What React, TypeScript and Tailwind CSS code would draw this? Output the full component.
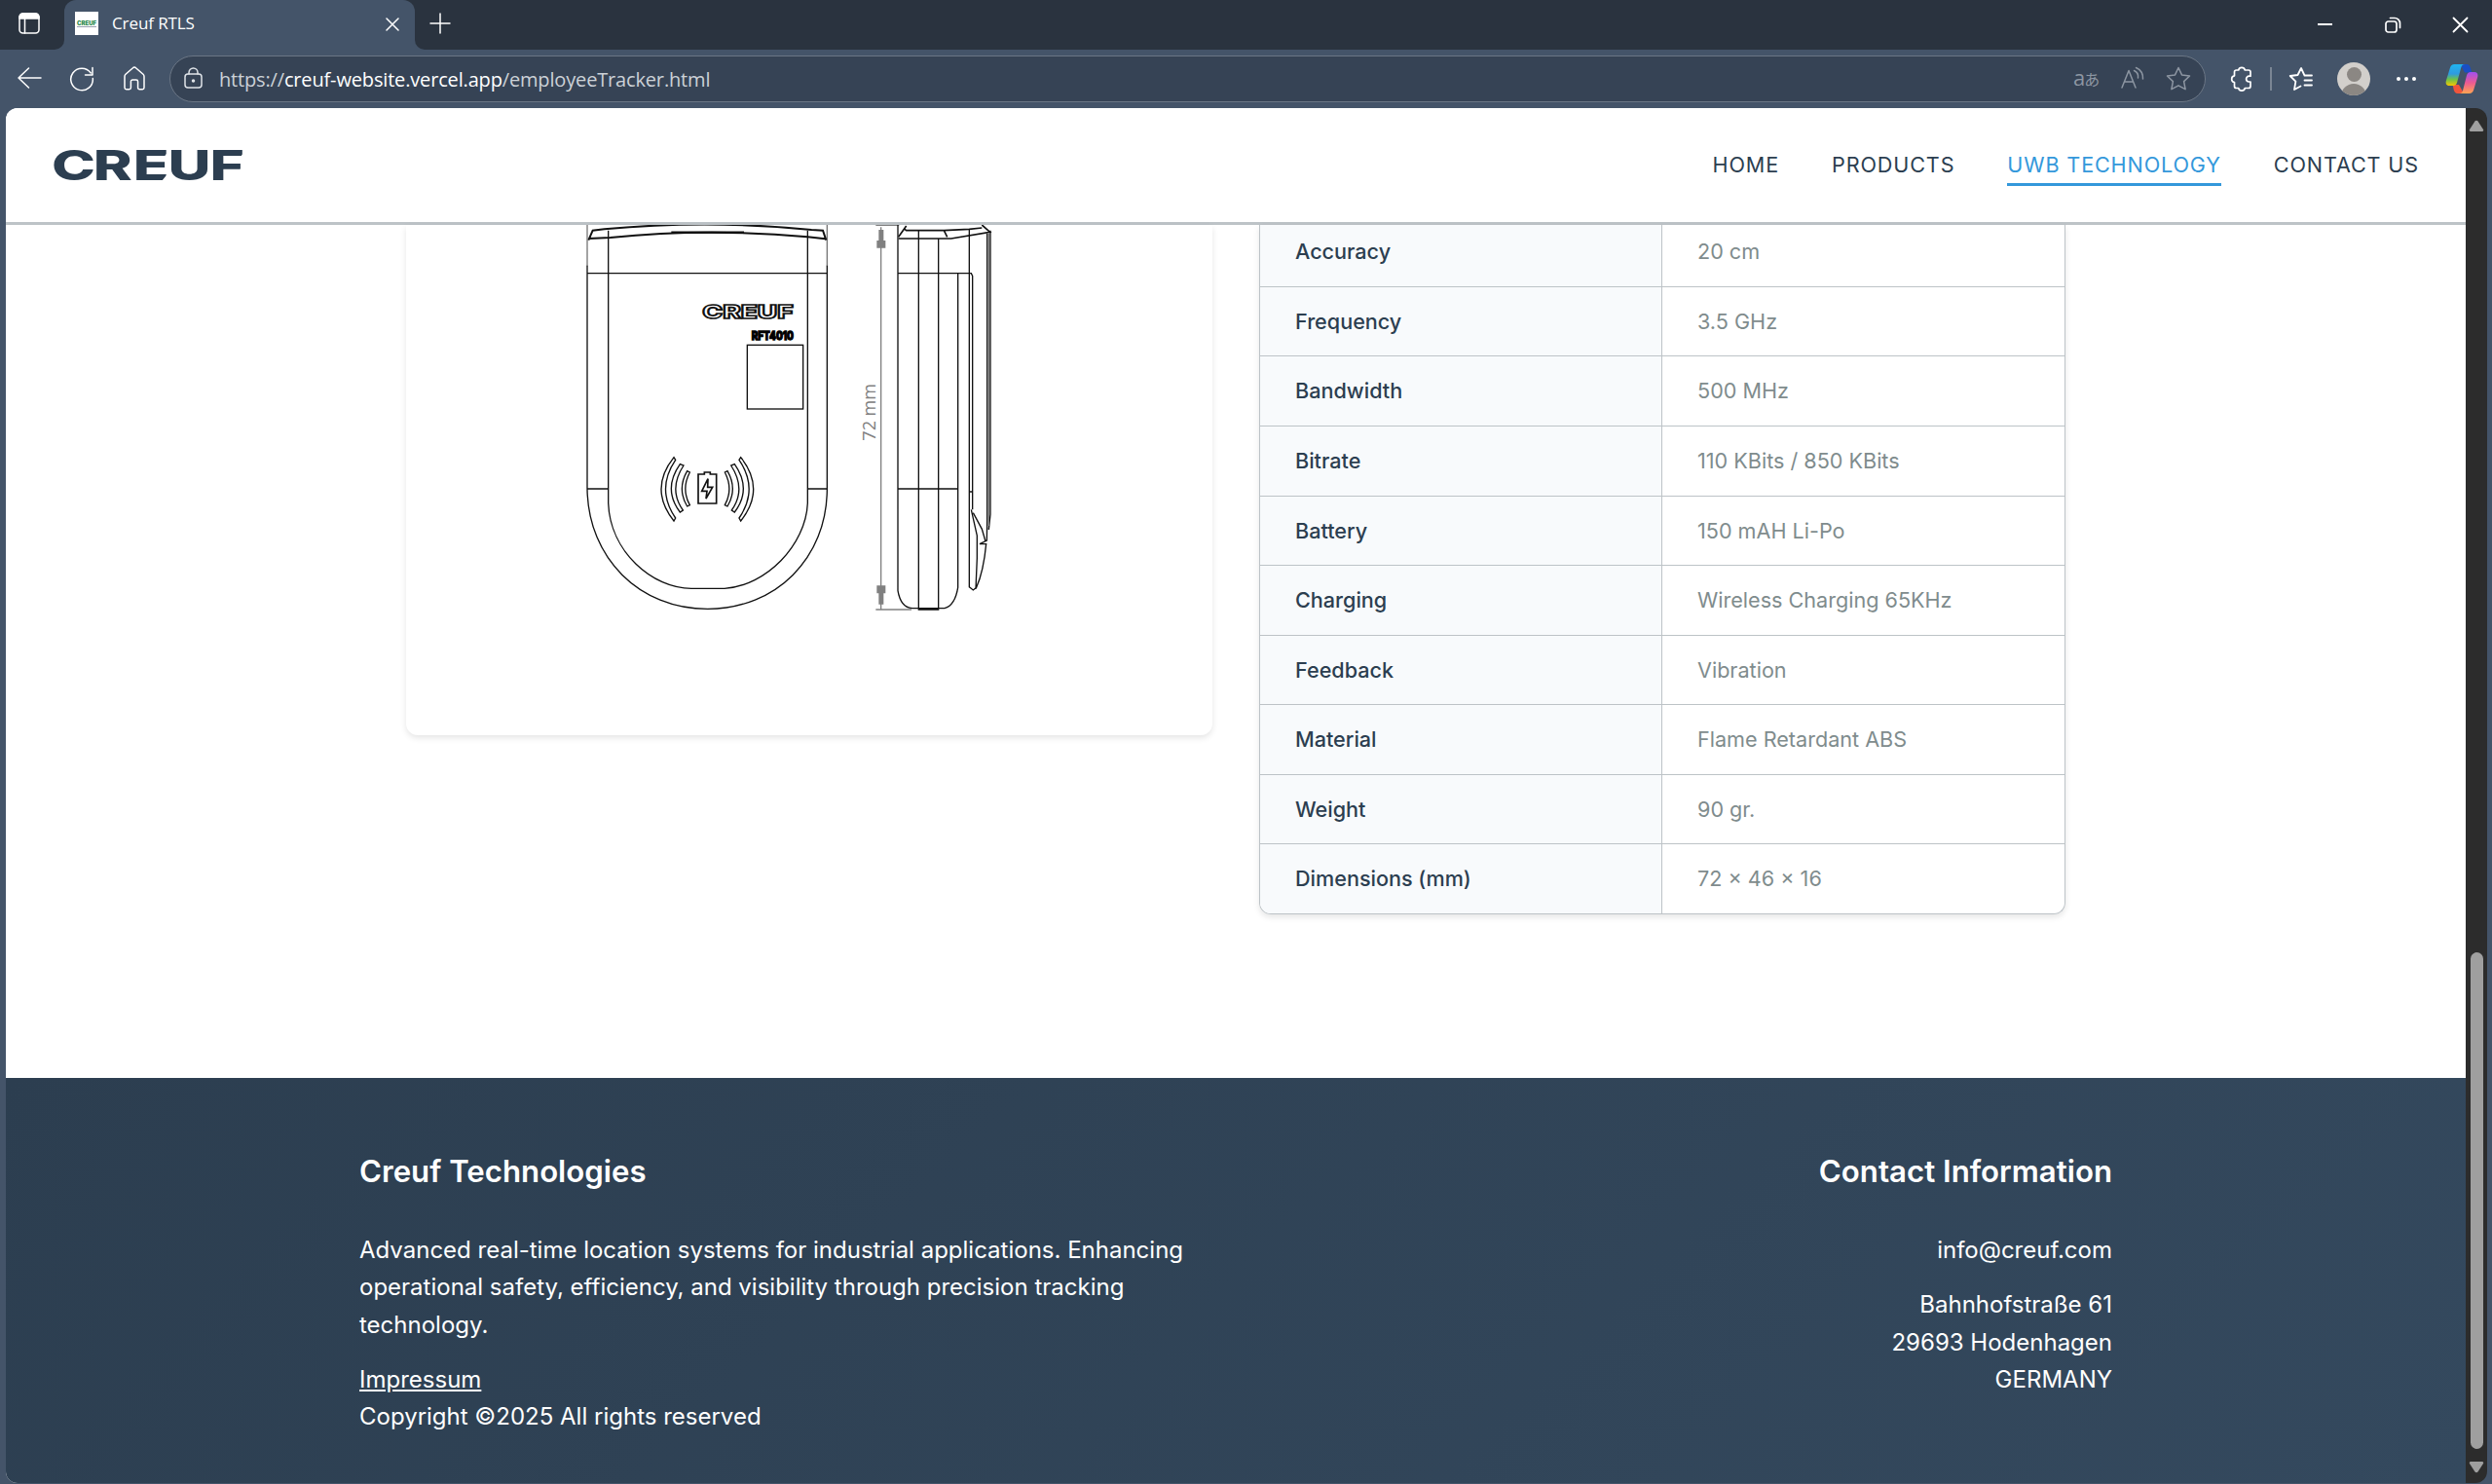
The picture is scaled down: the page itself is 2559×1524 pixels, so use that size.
import type { ReactNode } from "react";

const specs = [
  ["Accuracy", "20 cm"],
  ["Frequency", "3.5 GHz"],
  ["Bandwidth", "500 MHz"],
  ["Bitrate", "110 KBits / 850 KBits"],
  ["Battery", "150 mAH Li-Po"],
  ["Charging", "Wireless Charging 65KHz"],
  ["Feedback", "Vibration"],
  ["Material", "Flame Retardant ABS"],
  ["Weight", "90 gr."],
  ["Dimensions (mm)", "72 × 46 × 16"],
];

function Icon({ w, h, className = "", sw = 1.5, children }: { w: number; h: number; className?: string; sw?: number; children: ReactNode }) {
  return (
    <svg width={w} height={h} viewBox={`0 0 ${w} ${h}`} fill="none" stroke="currentColor" strokeWidth={sw} strokeLinecap="round" strokeLinejoin="round" className={`shrink-0 ${className}`}>
      {children}
    </svg>
  );
}

function TabStrip() {
  return (
    <div className="flex h-[51px] bg-[#445469] text-white">
      <div className="flex w-[66px] items-start rounded-br-[10px] bg-[#2a333f] pt-[12px] pl-[18px]">
        <Icon w={24} h={24}>
          <rect x="2" y="2" width="20" height="20" rx="3.5" />
          <path d="M2 5.5A3.5 3.5 0 0 1 5.500 2h13A3.500 3.500 0 0 1 22 5.500V7H2Z" fill="currentColor" />
          <path d="M7.500 7v15" />
        </Icon>
      </div>
      <div className="w-[360px] bg-[#2a333f]">
        <div className="flex h-full items-center rounded-t-[12px] bg-[#445469] pb-[3px] pl-[11px]">
          <div className="flex h-6 w-6 items-center justify-center bg-white">
            <span className="border-b border-gray-400 text-[6px] leading-[7px] font-black text-[#2f8a4e]">CREUF</span>
          </div>
          <span className="ml-[14px] font-['Open_Sans'] text-[17px] leading-6 tracking-[-0.1px]">Creuf RTLS</span>
          <Icon w={14} h={14} className="mr-[16px] ml-auto mt-[2px]">
            <path d="M1 1l12 12M13 1L1 13" />
          </Icon>
        </div>
      </div>
      <div className="flex flex-1 items-start rounded-bl-[10px] bg-[#2a333f] pl-[15px]">
        <Icon w={22} h={22} className="mt-[13px]">
          <path d="M11 1v20M1 11h20" />
        </Icon>
        <div className="mt-[17px] mr-[24px] ml-auto flex items-center gap-[52px]">
          <Icon w={17} h={17} sw={2}>
            <path d="M0 8h15" strokeLinecap="butt" />
          </Icon>
          <Icon w={17} h={17} sw={1.7}>
            <rect x="1" y="5" width="11" height="11" rx="2.5" />
            <path d="M5.500 1.500H10a5.500 5.500 0 0 1 5.500 5.500v4.500" />
          </Icon>
          <Icon w={17} h={17} sw={1.8}>
            <path d="M1.500 1.500l14 14M15.500 1.500l-14 14" />
          </Icon>
        </div>
      </div>
    </div>
  );
}

function Toolbar() {
  return (
    <div className="flex h-[60px] items-center bg-[#445469] pl-[17px] text-white">
      <Icon w={26} h={24} className="mb-[2px]">
        <path d="M12.500 2L2 12l10.500 10M2 12h23" />
      </Icon>
      <Icon w={26} h={26} className="ml-[28px]">
        <path d="M22.300 7A11.300 11.300 0 1 0 24.300 12.500M24 1.500V9h-7.500" />
      </Icon>
      <Icon w={24} h={26} className="ml-[29px]">
        <path d="M2 10.500a3 3 0 0 1 1-2.200l7.500-6.500a2 2 0 0 1 3 0L21 8.300a3 3 0 0 1 1 2.200V22a1.700 1.700 0 0 1-1.700 1.700h-3A1.700 1.700 0 0 1 15.600 22v-6.300a1.700 1.700 0 0 0-1.700-1.700h-3.800a1.700 1.700 0 0 0-1.700 1.700V22a1.700 1.700 0 0 1-1.700 1.700h-3A1.700 1.700 0 0 1 2 22Z" />
      </Icon>
      <div className="ml-[24px] flex h-[48px] w-[2091px] items-center rounded-full border-[1.5px] border-[#6b7685] bg-[#364355] pl-[14px]">
        <Icon w={20} h={24} className="mb-[2px] text-[#dfe3e8]">
          <rect x="1" y="8" width="17" height="14" rx="3" />
          <path d="M5 8V6.500a4.500 4.500 0 0 1 9 0V8" />
          <circle cx="9.500" cy="15" r="1" fill="currentColor" />
        </Icon>
        <span className="mt-px ml-[16px] font-['Open_Sans'] text-[20px] leading-7 tracking-[-0.16px] text-[#ccd1d7]">
          https://<span className="text-white">creuf-website.vercel.app</span>/employeeTracker.html
        </span>
        <div className="mr-[14px] ml-auto flex items-center text-[#8d96a2]">
          <span className="mr-[1px] mb-[2px] w-[27px] font-['Open_Sans','Noto_Sans_CJK_JP',sans-serif] text-[22px] leading-7 tracking-[-1px] whitespace-nowrap">
            a<span className="text-[16px]">あ</span>
          </span>
          <Icon w={24} h={24} className="mb-[2px] ml-[21px]">
            <path d="M1 22L8 4.500L15 22M3.500 16h9M13.500 4.500a7 7 0 0 1 4 7.500M15.500 1.500a12 12 0 0 1 7 11.500" />
          </Icon>
          <Icon w={26} h={26} className="ml-[22px]">
            <path d="M13 1.500l3.500 7.400 8 1.100-5.900 5.600 1.500 8.100L13 19.800l-7.100 3.900 1.500-8.100L1.500 10l8-1.100Z" />
          </Icon>
        </div>
      </div>
      <Icon w={24} h={26} className="ml-[24px]" sw={1.7}>
        <path d="M5.500 6a2 2 0 0 1 2-2h2.200a3.400 3.400 0 0 1 6.600 0H20a2 2 0 0 1 2 2v4.200h-1.500a2.900 2.900 0 0 0 0 5.800H22v4.500a2 2 0 0 1-2 2h-3.700a3.400 3.400 0 0 1-6.600 0H7.500a2 2 0 0 1-2-2v-4a3.400 3.400 0 0 1 0-6.700Z" />
      </Icon>
      <div className="ml-[18px] h-6 w-[2px] bg-[#7a8593]" />
      <Icon w={26} h={26} className="ml-[17px]" sw={1.8}>
        <path d="M24 9.500h-7.500L13 2 9.500 9 1.700 10l5.700 5.600L6 24l6.500-3.500M16.500 14.500H24M16.500 19.500H24" />
      </Icon>
      <div className="ml-[24px] flex h-[34px] w-[34px] flex-col items-center overflow-hidden rounded-full bg-[#d2cfcb] pt-[5px]">
        <div className="h-[15px] w-[15px] shrink-0 rounded-full bg-[#8b8783]" />
        <div className="mt-[2px] h-[20px] w-[26px] shrink-0 rounded-t-full bg-[#8b8783]" />
      </div>
      <div className="ml-[27px] flex gap-1">
        <div className="h-1 w-1 rounded-full bg-white" />
        <div className="h-1 w-1 rounded-full bg-white" />
        <div className="h-1 w-1 rounded-full bg-white" />
      </div>
      <Copilot />
    </div>
  );
}

function Copilot() {
  return (
    <svg width="34" height="32" viewBox="0 0 34 32" className="ml-[30px] shrink-0">
      <defs>
        <linearGradient id="cpA" x1="0" y1="0" x2="0" y2="1">
          <stop offset="0" stopColor="#1fb6f2" />
          <stop offset=".45" stopColor="#2f9ae0" />
          <stop offset=".7" stopColor="#6cc24a" />
          <stop offset="1" stopColor="#f5c800" />
        </linearGradient>
        <linearGradient id="cpB" x1="0" y1="0" x2="0" y2="1">
          <stop offset="0" stopColor="#a050f0" />
          <stop offset=".5" stopColor="#ec5a92" />
          <stop offset="1" stopColor="#ffa552" />
        </linearGradient>
      </defs>
      <path d="M16 1h6c2 0 3 1 3.600 3l1.800 5.500H20L16 2Z" fill="#1a4fc4" />
      <path d="M18 31h-5.500c-2 0-3-1.200-3.600-3.200L7.500 22H14l4 7Z" fill="#f0553c" />
      <path d="M9.500 1H20c-2 0-3 1-3.700 3.200L12 20c-.7 2-1.800 3-4 3H4C1 23 0 20.500 1 17.500L5 4.500C5.700 2.200 7 1 9.500 1Z" fill="url(#cpA)" />
      <path d="M24.500 31H14.500c2 0 3-1 3.600-3.200L22 12.500c.7-2.200 1.800-3.500 4-3.500H30c3 0 4 2.500 3.100 5.500l-4 13c-.7 2.300-2.100 3.500-4.600 3.500Z" fill="url(#cpB)" />
    </svg>
  );
}

function Logo() {
  return (
    <svg width="220" height="80" viewBox="54 130 220 80" className="mt-[19px] overflow-visible">
      <text transform="translate(0 184.5) scale(1.44 1)" x="36.800 66.500 95 119.800 149.700" y="0" fontFamily="Inter" fontSize="42" fontWeight="800" fill="#2c3e50">
        CREUF
      </text>
      {/* slanted cuts on the arm ends */}
      <path d="M175 153v11h-9ZM175 175v11h-9ZM253 153v12h-9ZM253 166v11h-9Z" fill="#fff" />
    </svg>
  );
}

function Header() {
  const item = "h-[39px] leading-[34.5px] text-[#2c3e50]";
  return (
    <header className="flex h-[120px] shrink-0 items-start justify-between border-b-[3px] border-[#bdc3c7] bg-white px-12">
      <Logo />
      <nav className="mt-[41px] flex gap-[54px] text-[21.6px] tracking-[0.86px]">
        <a className={item}>HOME</a>
        <a className={item}>PRODUCTS</a>
        <a className="h-[39px] border-b-[3px] border-[#3498db] leading-[34.5px] text-[#3498db]">UWB TECHNOLOGY</a>
        <a className={item}>CONTACT US</a>
      </nav>
    </header>
  );
}

function DeviceDrawing() {
  return (
    <svg width="500" height="409" viewBox="0 33 1500 1227" fill="none" stroke="#111" strokeWidth="4" className="ml-[143px]">
      <path d="M129 33V160M868 33V160" stroke="#777" />
      <path d="M129 158V846C132 1060 290 1216 500 1216S868 1060 868 846V158M194 50V890C200 1040 330 1153 450 1153H552C680 1145 802 1020 808 890V50M129 182H868M129 846H194M808 846H868" />
      <path d="M133 80L146 50L182 46Q500 16 820 48L855 50L865 80M133 75L200 72Q500 42 808 70L862 76" strokeWidth="6" />
      <path d="M388 56H612" strokeWidth="7" />
      <rect x="622" y="403" width="172" height="197" />
      <text x="484" y="322" fontSize="58" fontWeight="800" strokeWidth="5" textLength="280" lengthAdjust="spacingAndGlyphs" fontFamily="Inter">CREUF</text>
      <text x="635" y="388" fontSize="36" fontWeight="800" fill="#000" stroke="#000" strokeWidth="4" textLength="130" lengthAdjust="spacingAndGlyphs" fontFamily="Inter">RFT4010</text>
      {[0, 1].map((side) => (
        <g key={side} transform={side ? "translate(998 0) scale(-1 1)" : undefined} strokeWidth="4">
          <path d="M396 749Q318 847 396 945L401 936Q340 847 401 757Z" />
          <path d="M415 770Q361 847 415 918L424 912Q378 847 426 774Z" />
          <path d="M437 791Q405 847 437 900L445 896Q418 847 445 795Z" />
        </g>
      ))}
      <path d="M471 801H490V795H508V801H527V891H471Z" strokeWidth="5" />
      <path d="M501 815L482 853H498L495 876L515 841H500Z" strokeWidth="5" />
      <g stroke="#808080" fill="#808080">
        <path d="M1034 40V1216M1018 34H1090M1018 1218H1128" />
        <path d="M1029 50H1040V83H1046V102H1023V83H1029ZM1029 1200H1040V1166H1046V1146H1023V1166H1029Z" />
        <text transform="translate(1016 698) rotate(-90)" stroke="none" fontSize="54" textLength="176" lengthAdjust="spacingAndGlyphs" fontFamily="Open Sans">72 mm</text>
      </g>
      <path d="M1086 33V1160Q1095 1212 1130 1214H1230Q1262 1205 1271 1150V182M1150 50V1218H1211V75M1086 182H1312L1316 190V910M1086 846H1271M1306 45V1150M1306 855H1316" />
      <path d="M1088 70L1112 36M1104 44L1112 50H1228L1306 46L1345 42M1088 75H1250L1370 55L1345 33M1228 50L1238 70" strokeWidth="5" />
      <path d="M1361 60V970M1371 50V925L1366 972M1361 940L1360 1005L1338 1016H1358Q1350 1100 1328 1150L1318 1158L1306 1148M1312 910L1330 990V1060L1326 1155M1318 920L1345 970L1356 1008" />
      <path d="M1366 60V960" stroke="#666" />
    </svg>
  );
}

function Footer() {
  const heading = "mb-[36.8px] text-[31.2px] leading-[50px] font-semibold";
  return (
    <footer className="flex flex-1 justify-center bg-[linear-gradient(135deg,#2c3e50,#34495e)] pt-[71px] text-white">
      <div className="flex w-[1800px] justify-between text-[24px] leading-[38.4px]">
        <div className="w-[860px]">
          <h3 className={heading}>Creuf Technologies</h3>
          <p className="mb-[18px]">
            Advanced real-time location systems for industrial applications. Enhancing
            <br />
            operational safety, efficiency, and visibility through precision tracking
            <br />
            technology.
          </p>
          <p>
            <a className="underline">Impressum</a>
            <br />
            Copyright ©2025 All rights reserved
          </p>
        </div>
        <div className="text-right">
          <h3 className={heading}>Contact Information</h3>
          <p className="mb-[18px]">info@creuf.com</p>
          <p>
            Bahnhofstraße 61
            <br />
            29693 Hodenhagen
            <br />
            GERMANY
          </p>
        </div>
      </div>
    </footer>
  );
}

export default function App() {
  return (
    <div className="flex h-[1524px] w-[2559px] flex-col overflow-hidden bg-[#445469] font-['Inter',sans-serif]">
      <TabStrip />
      <Toolbar />
      <div className="mr-[5px] mb-px ml-[6px] flex min-h-0 flex-1 overflow-hidden rounded-[12px]">
        <div className="flex min-w-0 flex-1 flex-col bg-white">
          <Header />
          <main className="flex h-[876px] shrink-0 items-start gap-[48px] pl-[411px]">
            <section className="h-[524px] w-[828px] rounded-b-[12px] shadow-[0_3px_6px_rgba(0,0,0,0.1)]">
              <DeviceDrawing />
            </section>
            <section className="h-[708px] w-[828px] overflow-hidden rounded-b-[12px] border border-t-0 border-[#bdc3c7] text-[21.6px] leading-[34.56px] shadow-[0_3px_6px_rgba(0,0,0,0.1)]">
              <div className="-mt-[7.7px]">
                {specs.map(([label, value]) => (
                  <div key={label} className="flex border-b border-[#bdc3c7] last:border-b-0">
                    <div className="w-[413px] border-r border-[#bdc3c7] bg-[#f8fafc] px-9 py-[18px] font-medium text-[#2c3e50]">{label}</div>
                    <div className="px-9 py-[18px] text-[#7f8c8d]">{value}</div>
                  </div>
                ))}
              </div>
            </section>
          </main>
          <Footer />
        </div>
        <div className="flex w-[22px] flex-col items-center bg-[#2c2c2c]">
          <svg width="16" height="13" viewBox="0 0 16 13" className="mt-[12px] shrink-0" fill="#9f9f9f">
            <path d="M6.500 1.500a1.800 1.800 0 0 1 3 0L15 10a1.300 1.300 0 0 1-1 2H2a1.300 1.300 0 0 1-1-2Z" />
          </svg>
          <div className="mt-auto h-[510px] w-[13px] shrink-0 rounded-full bg-[#9f9f9f]" />
          <svg width="16" height="13" viewBox="0 0 16 13" className="mt-[12px] mb-[10px] shrink-0" fill="#9f9f9f">
            <path d="M6.500 11.500a1.800 1.800 0 0 0 3 0L15 3a1.300 1.300 0 0 0-1-2H2a1.300 1.300 0 0 0-1 2Z" />
          </svg>
        </div>
      </div>
    </div>
  );
}
